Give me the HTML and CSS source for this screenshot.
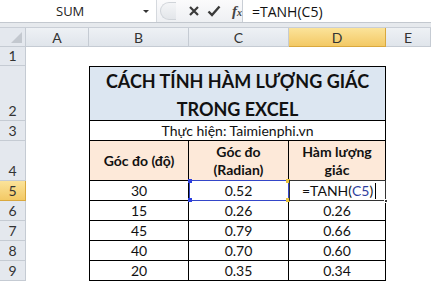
FILE: index.html
```html
<!DOCTYPE html>
<html lang="vi">
<head>
    <meta charset="UTF-8">
    <title>TANH trong Excel</title>
    <link rel="stylesheet" href="styles.css">
</head>
<body>
    <!-- Formula bar -->
    <div class="formula-bar">
        <div class="name-box">
            <span class="name">SUM</span>
            <span class="drop"></span>
        </div>
        <div class="tools">
            <span class="grip"></span>
            <svg class="tool" width="12" height="12" viewBox="0 0 12 12">
                <path d="M2 2 L10 10 M10 2 L2 10" stroke="#3a3a3a" stroke-width="2.2" fill="none"/>
            </svg>
            <svg class="tool" width="14" height="12" viewBox="0 0 14 12">
                <path d="M1.5 6.5 L5 10 L12.5 1.5" stroke="#3a3a3a" stroke-width="2.4" fill="none"/>
            </svg>
            <span class="fx">f<small>x</small></span>
        </div>
        <div class="formula">=TANH(C5)</div>
    </div>
    <div class="band"></div>

    <!-- Sheet -->
    <div class="sheet">
        <div class="corner"><span class="tri"></span></div>
        <div class="ch">A</div>
        <div class="ch">B</div>
        <div class="ch">C</div>
        <div class="ch active">D</div>
        <div class="ch">E</div>

        <div class="rh">1</div>
        <div class="blank span5"></div>

        <div class="rh">2</div>
        <div class="blank"></div>
        <div class="cell title span3">CÁCH TÍNH HÀM LƯỢNG GIÁC<br>TRONG EXCEL</div>
        <div class="blank"></div>

        <div class="rh">3</div>
        <div class="blank"></div>
        <div class="cell first span3">Thực hiện: Taimienphi.vn</div>
        <div class="blank"></div>

        <div class="rh">4</div>
        <div class="blank"></div>
        <div class="cell first head">Góc đo (độ)</div>
        <div class="cell head">Góc đo<br>(Radian)</div>
        <div class="cell head">Hàm lượng<br>giác</div>
        <div class="blank"></div>

        <div class="rh active">5</div>
        <div class="blank"></div>
        <div class="cell first">30</div>
        <div class="cell ref">0.52
            <span class="ref-box"></span>
            <span class="dot tl"></span><span class="dot bl"></span>
            <span class="dot tr"></span><span class="dot br"></span>
        </div>
        <div class="cell editing">=TANH(<span class="ref-text">C5</span>)<span class="caret"></span>
            <span class="edit-box"></span>
            <span class="fill-handle"></span>
        </div>
        <div class="blank"></div>

        <div class="rh">6</div>
        <div class="blank"></div>
        <div class="cell first">15</div>
        <div class="cell">0.26</div>
        <div class="cell">0.26</div>
        <div class="blank"></div>

        <div class="rh">7</div>
        <div class="blank"></div>
        <div class="cell first">45</div>
        <div class="cell">0.79</div>
        <div class="cell">0.66</div>
        <div class="blank"></div>

        <div class="rh">8</div>
        <div class="blank"></div>
        <div class="cell first">40</div>
        <div class="cell">0.70</div>
        <div class="cell">0.60</div>
        <div class="blank"></div>

        <div class="rh">9</div>
        <div class="blank"></div>
        <div class="cell first">20</div>
        <div class="cell">0.35</div>
        <div class="cell">0.34</div>
        <div class="blank"></div>
    </div>
</body>
</html>
```

FILE: styles.css
```css
* {
    box-sizing: border-box;
}
body {
    margin: 0;
    width: 431px;
    height: 283px;
    overflow: hidden;
    background: #fff;
    font-family: Lato, "Open Sans", sans-serif;
    color: #111;
}

/* Formula bar */
.formula-bar {
    display: flex;
    height: 23px;
    background: #fff;
    border-bottom: 1px solid #c3c8cf;
    font-family: "Open Sans", sans-serif;
}
.name-box {
    width: 157px;
    flex-shrink: 0;
    display: flex;
    align-items: center;
    border-right: 1px solid #d5d9de;
}
.name {
    margin-left: 56px;
    font-size: 13px;
    color: #222;
}
.drop {
    margin-left: auto;
    margin-right: 7px;
    width: 0;
    height: 0;
    border-left: 3px solid transparent;
    border-right: 3px solid transparent;
    border-top: 3px solid #333;
}
.tools {
    width: 86px;
    flex-shrink: 0;
    display: flex;
    align-items: center;
    border-right: 1px solid #c9ced5;
    background: linear-gradient(#fbfbfc, #eef0f3);
}
.grip {
    width: 16px;
    height: 18px;
    margin-left: 3px;
    border-radius: 9px 0 0 9px;
    border: 1px solid #d0d4d9;
    border-right: none;
    background: linear-gradient(#f4f5f7, #e3e6ea);
}
.tool {
    margin-left: 12px;
}
.tool + .tool {
    margin-left: 7px;
}
.fx {
    margin-left: 11px;
    font-family: "Liberation Serif", serif;
    font-style: italic;
    font-weight: bold;
    font-size: 15px;
    color: #444;
}
.fx small {
    font-size: 10px;
}
.formula {
    flex: 1;
    display: flex;
    align-items: center;
    padding-left: 9px;
    font-size: 14px;
    color: #111;
}
.band {
    height: 5px;
    background: #e6e9ed;
    border-bottom: 1px solid #c9ced6;
}

/* Sheet grid */
.sheet {
    display: grid;
    grid-template-columns: 26px 63px 100px 100px 97px 45px;
    grid-template-rows: 19px 19px 55px 20px 40px repeat(5, 20px);
}
.corner {
    background: #e4e8ee;
    border-right: 1px solid #c5cbd3;
    border-bottom: 1px solid #c5cbd3;
    position: relative;
}
.tri {
    position: absolute;
    right: 3px;
    bottom: 3px;
    width: 0;
    height: 0;
    border-left: 11px solid transparent;
    border-bottom: 11px solid #c3c8cf;
}
.ch {
    display: flex;
    align-items: center;
    justify-content: center;
    font-size: 14px;
    color: #333;
    background: linear-gradient(#eef1f5, #e0e5eb);
    border-right: 1px solid #c5cbd3;
    border-bottom: 1px solid #c5cbd3;
}
.rh {
    display: flex;
    align-items: flex-end;
    justify-content: center;
    padding-bottom: 1px;
    font-size: 14px;
    color: #333;
    background: #e4e8ee;
    border-right: 1px solid #c5cbd3;
    border-bottom: 1px solid #c5cbd3;
}
.ch.active,
.rh.active {
    background: linear-gradient(#fbe39a, #f3c965);
    border-color: #d9a83e;
    color: #333;
}
.blank {
    background: #fff;
}
.span5 {
    grid-column: span 5;
}
.span3 {
    grid-column: span 3;
}
.cell {
    display: flex;
    align-items: center;
    justify-content: center;
    text-align: center;
    font-size: 14px;
    line-height: 16px;
    border-right: 1px solid #000;
    border-bottom: 1px solid #000;
}
.cell.first {
    border-left: 1px solid #000;
}
.title {
    border-left: 1px solid #000;
    border-top: 1px solid #000;
    background: #dce6f1;
    font-size: 18px;
    font-weight: bold;
    line-height: 28px;
    padding-top: 3px;
}
.head {
    background: #fde9d9;
    font-weight: bold;
    line-height: 18px;
}

/* C5 range highlight from the formula */
.ref {
    position: relative;
}
.ref-box {
    position: absolute;
    left: 0;
    top: -1px;
    right: -1px;
    bottom: -1px;
    border: 1px solid #3446c8;
}
.dot {
    position: absolute;
    width: 4px;
    height: 4px;
    background: #2d3fe0;
}
.dot.tl { left: -1px; top: -2px; }
.dot.bl { left: -1px; bottom: -2px; }
.dot.tr { right: -2px; top: -2px; background: #e8c43a; }
.dot.br { right: -2px; bottom: -2px; background: #e8c43a; }

/* D5 cell in edit mode */
.editing {
    position: relative;
    justify-content: flex-start;
    padding-left: 13px;
}
.ref-text {
    color: #2f3f9e;
}
.caret {
    display: inline-block;
    width: 1px;
    height: 16px;
    margin-left: 2px;
    background: #000;
}
.edit-box {
    position: absolute;
    left: 0;
    top: -1px;
    right: -1px;
    bottom: -1px;
    border: 1px solid #333;
}
.fill-handle {
    position: absolute;
    right: -3px;
    bottom: -3px;
    width: 4px;
    height: 4px;
    background: #333;
    border: 1px solid #fff;
}
```
